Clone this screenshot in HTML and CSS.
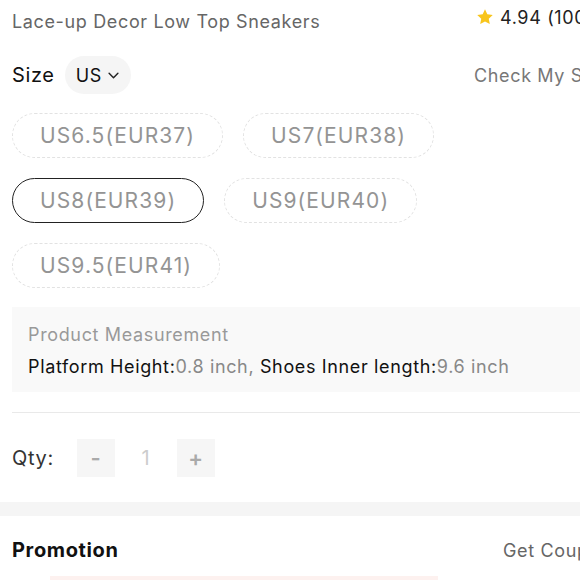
FILE: index.html
```html
<!DOCTYPE html>
<html>
<head>
<meta charset="utf-8">
<link rel="stylesheet" href="styles.css">
</head>
<body>
<div class="page">
  <div class="main">
    <div class="title-row">
      <div class="title">Lace-up Decor Low Top Sneakers</div>
      <div class="rating">
        <svg class="star" viewBox="0 0 24 24" width="18" height="18"><path d="M12 1.8l3.1 6.6 7.2.9-5.3 5 1.4 7.1L12 17.9l-6.4 3.5 1.4-7.1-5.3-5 7.2-.9z" fill="#f8c51c"/></svg>
        <span>4.94 (1000+)</span>
      </div>
    </div>
    <div class="size-row">
      <div class="size-left">
        <span class="size-label">Size</span>
        <span class="unit-pill">US
          <svg class="chev" viewBox="0 0 10 6" width="11" height="7"><path d="M1 1l4 4 4-4" fill="none" stroke="#222" stroke-width="1.3" stroke-linecap="round" stroke-linejoin="round"/></svg>
        </span>
      </div>
      <div class="check">Check My Size</div>
    </div>
    <div class="sizes">
      <span class="sz">US6.5(EUR37)</span>
      <span class="sz">US7(EUR38)</span>
      <span class="sz sel">US8(EUR39)</span>
      <span class="sz">US9(EUR40)</span>
      <span class="sz">US9.5(EUR41)</span>
    </div>
    <div class="measure">
      <div class="m-title">Product Measurement</div>
      <div class="m-line"><span class="k">Platform Height:</span><span class="v">0.8 inch, </span><span class="k">Shoes Inner length:</span><span class="v">9.6 inch</span></div>
    </div>
    <div class="divider"></div>
    <div class="qty-row">
      <span class="qty-label">Qty:</span>
      <span class="qbtn">-</span>
      <span class="qnum">1</span>
      <span class="qbtn plus">+</span>
    </div>
  </div>
  <div class="band"></div>
  <div class="promo">
    <div class="promo-row">
      <span class="promo-title">Promotion</span>
      <span class="coupon">Get Coupons</span>
    </div>
    <div class="promo-bar"></div>
  </div>
</div>
</body>
</html>
```
FILE: styles.css
```css
html, body {
  margin: 0;
  padding: 0;
  background: #fff;
  overflow: hidden;
}
body {
  font-family: Inter, "Noto Sans", "Liberation Sans", sans-serif;
  color: #222;
  letter-spacing: 0.04em;
}
.page {
  width: 680px;
}
.main {
  padding-left: 12px;
}
.title-row {
  display: flex;
  justify-content: space-between;
  align-items: center;
  height: 42px;
}
.title {
  font-size: 18px;
  color: #666;
}
.rating {
  display: flex;
  align-items: center;
  gap: 6px;
  font-size: 18px;
  color: #222;
  width: 204px;
  margin-top: -8px;
}
.star {
  display: block;
}
.size-row {
  display: flex;
  justify-content: space-between;
  align-items: center;
  margin-top: 14px;
  height: 38px;
}
.size-left {
  display: flex;
  align-items: center;
  gap: 10px;
}
.size-label {
  font-size: 20px;
  color: #111;
}
.unit-pill {
  display: inline-flex;
  align-items: center;
  gap: 6px;
  height: 38px;
  padding: 0 12px 0 11px;
  border-radius: 19px;
  background: #f5f5f5;
  font-size: 18px;
  color: #111;
}
.chev {
  display: block;
}
.check {
  font-size: 18px;
  color: #777;
  width: 206px;
}
.sizes {
  display: flex;
  flex-wrap: wrap;
  gap: 20px 20px;
  width: 460px;
  margin-top: 19px;
}
.sz {
  display: inline-flex;
  align-items: center;
  height: 45px;
  box-sizing: border-box;
  padding: 0 27px;
  border: 1.5px dashed #e2e2e2;
  border-radius: 23px;
  font-size: 21px;
  letter-spacing: 1.1px;
  color: #949494;
}
.sz.sel {
  border: 1.5px solid #222;
}
.measure {
  margin-top: 19px;
  background: #f9f9f9;
  padding: 16px 16px 0;
  height: 85px;
  box-sizing: border-box;
}
.m-title {
  font-size: 18px;
  color: #999;
  line-height: 24px;
}
.m-line {
  font-size: 18px;
  line-height: 24px;
  margin-top: 8px;
}
.m-line .k {
  color: #111;
}
.m-line .v {
  color: #888;
}
.divider {
  margin-top: 20px;
  height: 1px;
  background: #e9e9e9;
}
.qty-row {
  display: flex;
  align-items: center;
  margin-top: 26px;
  height: 38px;
}
.qty-label {
  font-size: 20px;
  color: #333;
  width: 65px;
}
.qbtn {
  width: 38px;
  height: 38px;
  background: #f6f6f6;
  display: flex;
  align-items: center;
  justify-content: center;
  font-size: 22px;
  font-weight: 600;
  color: #aaa;
}
.qnum {
  width: 62px;
  text-align: center;
  font-size: 20px;
  color: #ccc;
}
.band {
  margin-top: 25px;
  height: 14px;
  background: #f5f5f5;
}
.promo {
  padding-left: 12px;
}
.promo-row {
  display: flex;
  justify-content: space-between;
  align-items: center;
  height: 40px;
  margin-top: 14px;
}
.promo-title {
  font-size: 20px;
  font-weight: 700;
  color: #111;
}
.coupon {
  font-size: 18px;
  color: #666;
  width: 177px;
}
.promo-bar {
  margin: 6px 0 0 38px;
  width: 388px;
  height: 10px;
  background: #fdf1ef;
}
```
